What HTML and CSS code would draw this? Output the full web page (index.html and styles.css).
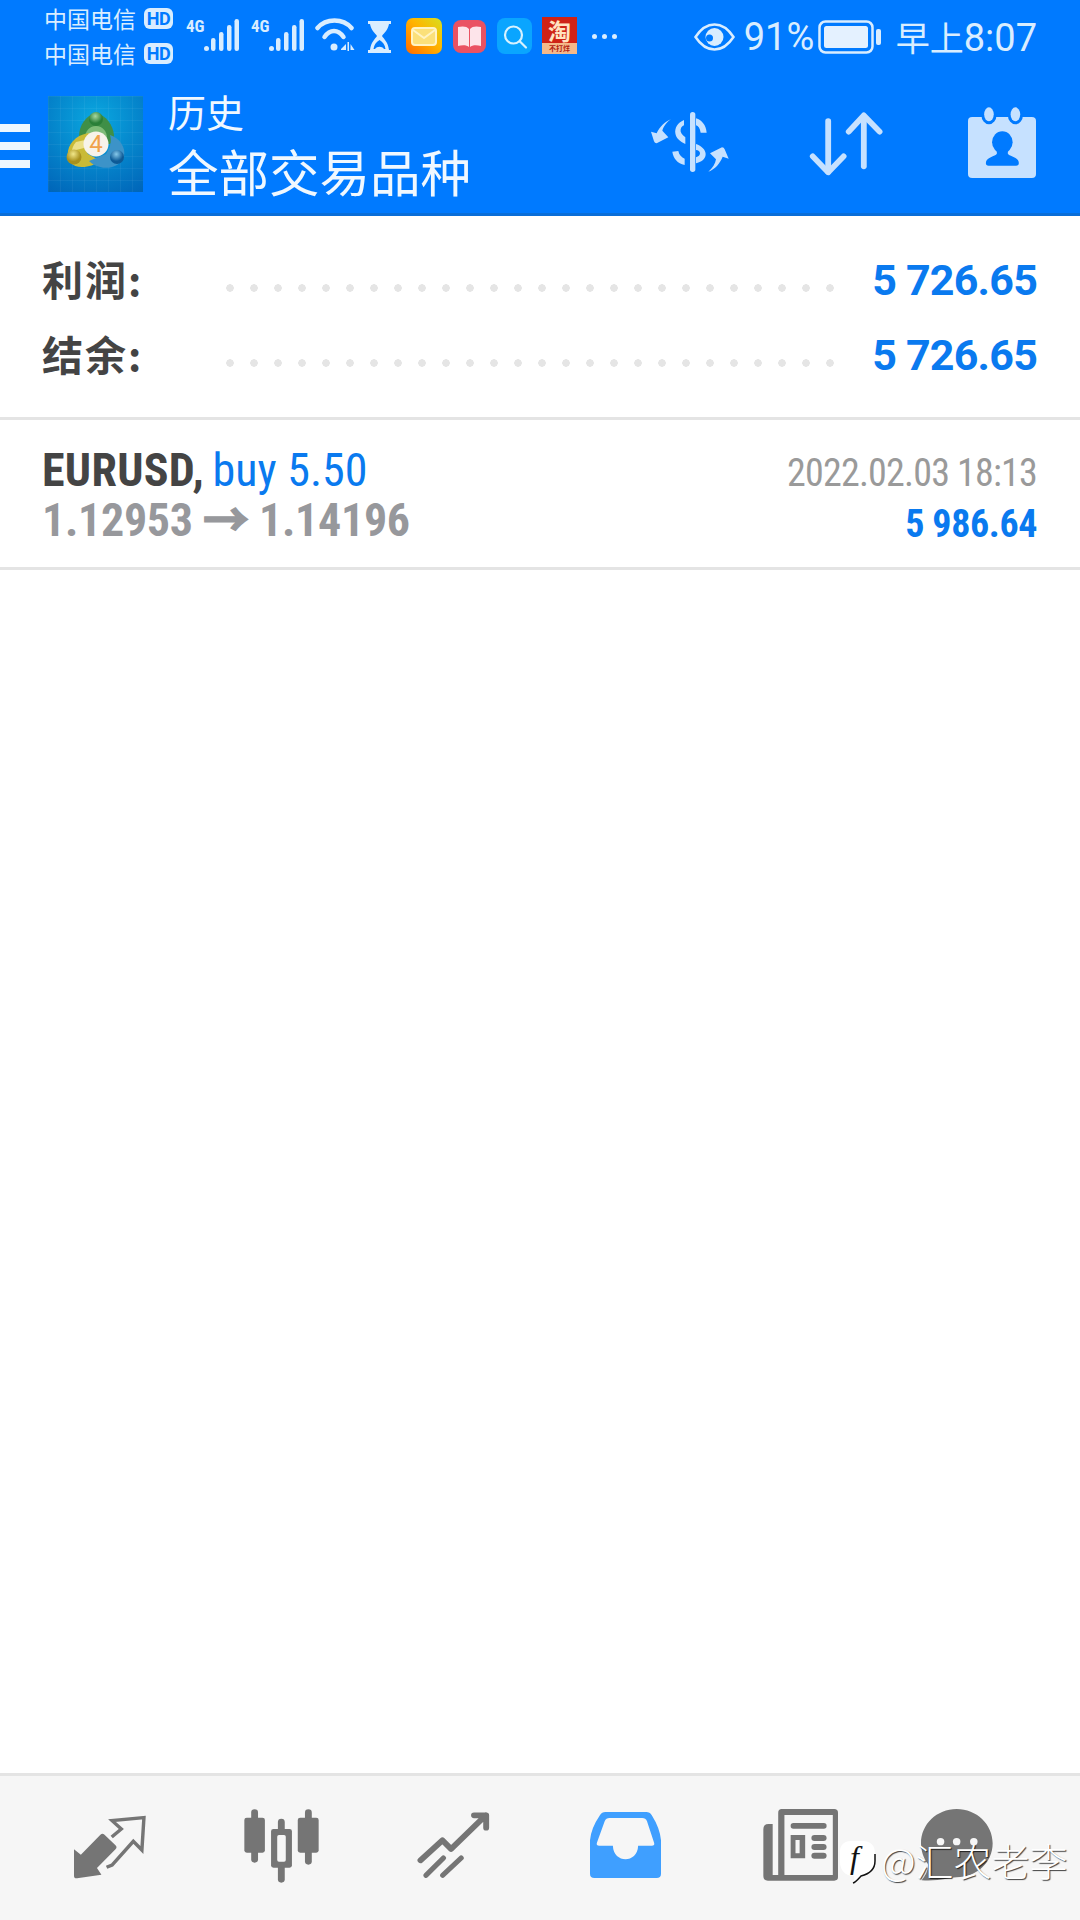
FILE: index.html
```html
<!DOCTYPE html>
<html lang="zh-CN">
<head>
  <meta charset="UTF-8" />
  <meta name="viewport" content="width=device-width, initial-scale=1.0"/>
  <title>历史 – 全部交易品种</title>
  <link rel="stylesheet" href="styles.css">
</head>
<body>
  <div class="phone">
    <header class="header">
      <!-- status bar -->
      <div class="status">
        <div class="carriers">
          <div class="carrier">中国电信<span class="hd">HD</span></div>
          <div class="carrier">中国电信<span class="hd">HD</span></div>
        </div>
        <span class="net">4G</span>
        <svg class="signal" width="35" height="34" viewBox="0 0 35 34"><g fill="#d9edff"><circle cx="2.500" cy="29.500" r="2.500"/><rect x="7" y="19" width="4.500" height="13" rx="2.200"/><rect x="15" y="13" width="4.500" height="19" rx="2.200"/><rect x="23" y="6" width="4.500" height="26" rx="2.200"/><rect x="30.500" y="0" width="4.500" height="32" rx="2.200"/></g></svg>
        <span class="net">4G</span>
        <svg class="signal" width="35" height="34" viewBox="0 0 35 34"><g fill="#d9edff"><circle cx="2.500" cy="29.500" r="2.500"/><rect x="7" y="19" width="4.500" height="13" rx="2.200"/><rect x="15" y="13" width="4.500" height="19" rx="2.200"/><rect x="23" y="6" width="4.500" height="26" rx="2.200"/><rect x="30.500" y="0" width="4.500" height="32" rx="2.200"/></g></svg>
        <svg class="wifi" width="40" height="36" viewBox="0 0 40 36"><g fill="none" stroke="#d9edff" stroke-width="4.500" stroke-linecap="round"><path d="M2.500 11 C11 1 28 1 36.500 11"/><path d="M9.500 20 C15 12 23 12 28.500 20"/></g><circle cx="19" cy="30" r="3.500" fill="#d9edff"/><path d="M26 32 L31 27 V33 H26Z M32.500 25 V34 H34 V25Z M35.500 27 L39.500 33 H35.500Z" fill="#d9edff"/></svg>
        <svg class="glass" width="25" height="34" viewBox="0 0 25 34"><path d="M1 1 H24 V4 H22 C21 10 17 13 15 16 C17 19 21 22 22 30 H24 V33 H1 V30 H3 C4 22 8 19 10 16 C8 13 4 10 3 4 H1Z" fill="#d9edff"/><path d="M12.500 20 C9 22 7 25 6.500 29 H18.500 C18 25 16 22 12.500 20Z" fill="#007aff"/><path d="M8 29 C10 26 15 26 17 29Z" fill="#d9edff"/></svg>
        <svg class="app-mail" width="36" height="36" viewBox="0 0 36 36"><defs><linearGradient id="mailBg" x1="0" y1="1" x2="1" y2="0"><stop offset="0" stop-color="#ff6a00"/><stop offset=".55" stop-color="#ffb400"/><stop offset="1" stop-color="#d6e020"/></linearGradient></defs><rect width="36" height="36" rx="7" fill="url(#mailBg)"/><rect x="6" y="10" width="24" height="17" rx="3" fill="#fbe07a" stroke="#fff3c4" stroke-width="2"/><path d="M7 12 L18 20 L29 12" fill="none" stroke="#fff3c4" stroke-width="2"/></svg>
        <svg class="app-book" width="33" height="33" viewBox="0 0 33 33"><rect width="33" height="33" rx="8" fill="#ea5263"/><path d="M5 7 C9 6 14 6 16 9 V27 C14 25 9 25 5 26Z M28 7 C24 6 19 6 17 9 V27 C19 25 24 25 28 26Z" fill="#fde4ea"/></svg>
        <svg class="app-search" width="35" height="36" viewBox="0 0 35 36"><rect width="35" height="36" rx="8" fill="#0aa5ff"/><circle cx="16.500" cy="17" r="8.500" fill="none" stroke="#d7f2ff" stroke-width="2.200"/><path d="M23 23.500 L29 29.500" stroke="#d7f2ff" stroke-width="2.200" stroke-linecap="round"/></svg>
        <div class="app-tao"><span class="tao-main">淘</span><span class="tao-sub">不打烊</span></div>
        <span class="more"><i></i><i></i><i></i></span>
        <div class="status-right">
          <svg class="eye" width="41" height="28" viewBox="0 0 41 28"><path d="M1.500 14 C8 4 14 1.500 20.500 1.500 C27 1.500 33 4 39.500 14 C33 24 27 26.500 20.500 26.500 C14 26.500 8 24 1.500 14Z" fill="none" stroke="#d9edff" stroke-width="2.500"/><circle cx="20.500" cy="14" r="9" fill="#d9edff"/><circle cx="15.500" cy="15" r="3.500" fill="#007aff"/></svg>
          <span class="pct">91%</span>
          <svg class="battery" width="63" height="34" viewBox="0 0 63 34"><rect x="1.500" y="1.500" width="53" height="31" rx="6" fill="none" stroke="#d9edff" stroke-width="2.500"/><rect x="6" y="6" width="44" height="22" rx="2.500" fill="#e4f1ff"/><rect x="58" y="9" width="5" height="16" rx="2" fill="#d9edff"/></svg>
          <span class="clock">早上<span class="clock-num">8:07</span></span>
        </div>
      </div>

      <!-- app bar -->
      <div class="appbar">
        <div class="burger"><i></i><i></i><i></i></div>
        <svg class="logo" width="95" height="96" viewBox="0 0 95 96">
          <defs>
            <radialGradient id="logoBg" cx=".5" cy=".25" r=".9"><stop offset="0" stop-color="#0aa8e0"/><stop offset="1" stop-color="#0064b8"/></radialGradient>
            <pattern id="logoGrid" width="12" height="12" patternUnits="userSpaceOnUse"><path d="M12 0 H0 V12" fill="none" stroke="#fff" stroke-opacity=".09"/></pattern>
            <radialGradient id="gBall" cx=".45" cy=".3"><stop offset="0" stop-color="#a8d8a0"/><stop offset="1" stop-color="#2a7f38"/></radialGradient>
            <radialGradient id="yBall" cx=".45" cy=".3"><stop offset="0" stop-color="#f1e78a"/><stop offset="1" stop-color="#a8901c"/></radialGradient>
            <radialGradient id="bBall" cx=".45" cy=".3"><stop offset="0" stop-color="#86c8ea"/><stop offset="1" stop-color="#0d5a96"/></radialGradient>
          </defs>
          <rect width="95" height="96" fill="url(#logoBg)"/>
          <rect width="95" height="96" fill="url(#logoGrid)"/>
          <path d="M48 17 C38 19 31 30 31 40 C31 43 32 46 34 48 L62 48 C65 45 66 42 66 39 C65 29 58 19 48 17Z" fill="#3f8f47"/>
          <path d="M48 30 C41 30 37 36 37 42 L59 42 C59 36 55 30 48 30Z" fill="#7fbc78"/>
          <path d="M44 37 C31 37 22 45 20 55 C18 65 24 71 34 71 C41 71 47 69 51 64 L40 58 C36 52 38 44 44 37Z" fill="#c9ba36"/>
          <path d="M28 46 C25 49 24 53 24 55 L36 52 L37 44Z" fill="#ece08a"/>
          <path d="M62 39 C72 42 78 52 76 60 C74 69 62 74 52 71 C47 70 44 68 41 65 L58 58 C62 52 64 46 62 39Z" fill="#3c93c8"/>
          <circle cx="48" cy="23" r="7" fill="url(#gBall)"/>
          <circle cx="26" cy="61" r="7.500" fill="url(#yBall)"/>
          <circle cx="69" cy="61" r="7" fill="url(#bBall)"/>
          <circle cx="48" cy="48" r="12.500" fill="#f7f3ea"/>
          <text class="logo-num" x="48" y="56" text-anchor="middle">4</text>
        </svg>
        <div class="titles">
          <div class="title-small">历史</div>
          <div class="title-big">全部交易品种</div>
        </div>
        <div class="actions">
          <svg class="act-dollar" width="79" height="60" viewBox="30 36 237 180" preserveAspectRatio="none">
            <g fill="#c6e1ff">
              <rect x="150" y="36" width="16" height="180" rx="8"/>
              <path d="M168 55 C185 60 198 75 200 98 L182 98 C180 85 175 78 168 76Z"/>
              <path d="M132 60 C112 68 104 85 106 100 C108 115 120 125 136 132 L136 112 C125 105 120 95 122 88 C124 80 128 78 132 76Z"/>
              <path d="M168 132 C185 138 197 150 197 162 C197 178 183 186 168 190 L168 172 C176 170 180 166 180 160 C180 154 175 150 168 150Z"/>
              <path d="M97 155 L115 153 C117 165 125 172 134 176 L134 195 C112 190 100 175 97 155Z"/>
              <path d="M93 58 C80 66 70 80 67 92 L85 112 L50 130 Q44 130 42 124 L33 95 L50 100 C58 82 75 65 93 58Z"/>
              <path d="M205 215 C218 205 226 190 228 178 L210 160 L246 142 Q252 142 254 148 L266 176 L248 170 C240 190 225 208 205 215Z"/>
            </g>
          </svg>
          <svg class="act-sort" width="74" height="64" viewBox="780 335 216 192" preserveAspectRatio="none">
            <g fill="none" stroke="#c6e1ff" stroke-width="17" stroke-linecap="round" stroke-linejoin="round">
              <path d="M836 362 V514"/>
              <path d="M791 468 L836 516 L881 468"/>
              <path d="M940 350 V498"/>
              <path d="M896 394 L940 345 L986 394"/>
            </g>
          </svg>
          <svg class="act-cal" width="68" height="71" viewBox="1242 322 198 213" preserveAspectRatio="none">
            <rect x="1242" y="352" width="198" height="183" rx="12" fill="#c6e1ff"/>
            <ellipse cx="1303" cy="346" rx="22" ry="28" fill="#007aff"/>
            <ellipse cx="1380" cy="346" rx="22" ry="28" fill="#007aff"/>
            <ellipse cx="1303" cy="344" rx="14" ry="21" fill="#c6e1ff"/>
            <ellipse cx="1380" cy="344" rx="14" ry="21" fill="#c6e1ff"/>
            <ellipse cx="1342" cy="428" rx="30" ry="33" fill="#007aff"/>
            <path d="M1326 450 H1358 V462 C1362 470 1390 472 1390 490 Q1390 498 1382 498 H1302 Q1294 498 1294 490 C1294 472 1322 470 1326 462Z" fill="#007aff"/>
          </svg>
        </div>
      </div>
    </header>

    <section class="summary">
      <div class="sum-row">
        <span class="sum-label">利润:</span>
        <span class="dots"></span>
        <span class="sum-value">5 726.65</span>
      </div>
      <div class="sum-row">
        <span class="sum-label">结余:</span>
        <span class="dots"></span>
        <span class="sum-value">5 726.65</span>
      </div>
    </section>

    <section class="trade">
      <div class="trade-left">
        <div class="trade-name"><b>EURUSD,</b> <span class="blue">buy 5.50</span></div>
        <div class="trade-price">1.12953 <span class="arrow">→</span> 1.14196</div>
      </div>
      <div class="trade-right">
        <div class="trade-date">2022.02.03 18:13</div>
        <div class="trade-profit">5 986.64</div>
      </div>
    </section>

    <div class="spacer"></div>

    <nav class="tabs">
      <svg class="tab-trade" width="72" height="64" viewBox="215 163 210 192" preserveAspectRatio="none">
        <path d="M292 222 Q298 216 304 222 L336 254 Q342 260 336 266 L282 322 L295 342 L224 353 Q215 354 215 345 L215 266 L235 282Z" fill="#757575"/>
        <path d="M325 229 L353 205 L326 180 L419 171 L413 268 L388 242 L326 313 L310 320" fill="none" stroke="#757575" stroke-width="10"/>
      </svg>
      <svg class="tab-candles" width="75" height="74" viewBox="708 147 219 222" preserveAspectRatio="none">
        <g fill="#757575">
          <rect x="729" y="148" width="20" height="160" rx="10"/>
          <rect x="709" y="173" width="60" height="105" rx="7"/>
          <rect x="807" y="176" width="20" height="192" rx="10"/>
          <rect x="787" y="207" width="61" height="116" rx="7"/>
          <rect x="886" y="148" width="20" height="166" rx="10"/>
          <rect x="865" y="173" width="61" height="105" rx="7"/>
        </g>
        <rect x="805" y="225" width="25" height="80" rx="5" fill="#f6f6f6"/>
      </svg>
      <svg class="tab-line" width="73" height="66" viewBox="1212 155 210 198" preserveAspectRatio="none">
        <g fill="none" stroke="#757575" stroke-linecap="round" stroke-linejoin="round">
          <path d="M1222 300 L1285 240 L1310 266 L1410 165 M1376 165 H1411 V202" stroke-width="17"/>
          <path d="M1238 345 L1288 293 M1286 345 L1339 293" stroke-width="15"/>
        </g>
      </svg>
      <svg class="tab-inbox" width="71" height="66" viewBox="147 155 208 198" preserveAspectRatio="none">
        <path d="M192 155 H312 Q322 155 328 165 Q352 204 355 240 V340 Q355 353 342 353 H160 Q147 353 147 340 V240 Q150 204 176 165 Q182 155 192 155Z" fill="#3f9fff"/>
        <path d="M204 173 H300 Q310 173 314 183 L335 248 Q337 256 328 256 H288 C286 310 216 310 214 256 H174 Q165 256 167 248 L190 183 Q194 173 204 173Z" fill="#f6f6f6"/>
      </svg>
      <svg class="tab-news" width="75" height="72" viewBox="646 147 217 216" preserveAspectRatio="none">
        <path d="M700 147 H852 Q863 147 863 158 V352 Q863 362 852 362 H660 Q647 362 647 348 V208 Q647 192 662 192 H674 V345 H690 V158 Q690 147 700 147Z M708 165 V345 H848 V165Z" fill="#757575" fill-rule="evenodd"/>
        <g fill="#757575">
          <rect x="726" y="189" width="104" height="17" rx="8"/>
          <path d="M726 225 H768 V295 H726Z M740 240 V280 H752 V240Z" fill-rule="evenodd"/>
          <rect x="786" y="225" width="44" height="18" rx="9"/>
          <rect x="786" y="252" width="44" height="18" rx="9"/>
          <rect x="786" y="278" width="44" height="18" rx="9"/>
        </g>
      </svg>
      <svg class="tab-chat" width="72" height="72" viewBox="1108 147 210 216" preserveAspectRatio="none">
        <path d="M1212 147 C1270 147 1317 193 1317 250 C1317 308 1270 352 1212 352 C1190 352 1160 365 1110 361 C1122 345 1130 330 1128 312 C1115 295 1108 272 1108 250 C1108 193 1154 147 1212 147Z" fill="#757575"/>
        <g fill="#f6f6f6"><circle cx="1165" cy="245" r="11"/><circle cx="1212" cy="245" r="11"/><circle cx="1262" cy="245" r="11"/></g>
      </svg>
    </nav>

    <!-- watermark over tab bar -->
    <div class="mark">
      <svg class="mark-logo" width="37" height="44" viewBox="0 0 37 44">
        <path d="M12 1 H24 C32 1 36 6 36 14 V21 C36 29 30 34 22 36 C20 38 17 42 14 42 C15 40 16 38 15 36 C6 36 1 30 1 22 V12 C1 5 5 1 12 1Z" fill="#fff"/>
        <path d="M36 14 V21 C36 29 30 34 22 36 C20 38 17 42 14 43" fill="none" stroke="#111" stroke-width="1.500"/>
        <text class="mark-f" x="11" y="28">f</text>
      </svg>
      <span class="mark-text">@汇农老李</span>
    </div>
  </div>
</body>
</html>
```

FILE: styles.css
```css
* {
  box-sizing: border-box;
}
body {
  margin: 0;
  background: #fff;
  font-family: 'Roboto', 'Noto Sans CJK SC', sans-serif;
}
.phone {
  position: relative;
  width: 1080px;
  height: 1920px;
  display: flex;
  flex-direction: column;
  overflow: hidden;
}

/* header */
.header {
  height: 216px;
  background: #007aff;
  border-bottom: 3px solid #0a6ed8;
}
.status {
  height: 75px;
  display: flex;
  align-items: flex-start;
  padding-left: 44px;
  color: #d9edff;
}
.carriers {
  width: 142px;
  padding-top: 1px;
}
.carrier {
  display: flex;
  align-items: center;
  height: 35px;
  font-size: 23px;
  font-family: 'Noto Sans CJK SC', sans-serif;
  line-height: 35px;
}
.hd {
  margin-left: 8px;
  width: 29px;
  height: 21px;
  border-radius: 6px;
  background: #d9edff;
  color: #007aff;
  font: 700 18px/21px 'Roboto', sans-serif;
  text-align: center;
  letter-spacing: -.5px;
}
.net {
  width: 18px;
  margin-top: 17px;
  font: 700 17px/18px 'Roboto', sans-serif;
  font-stretch: 75%;
}
.signal {
  margin: 19px 12px 0 0;
}
.wifi {
  margin: 17px 0 0 -1px;
}
.glass {
  margin: 20px 0 0 12px;
}
.app-mail {
  margin: 18px 0 0 14px;
}
.app-book {
  margin: 20px 0 0 11px;
}
.app-search {
  margin: 18px 0 0 11px;
}
.app-tao {
  width: 35px;
  height: 37px;
  margin: 17px 0 0 10px;
  background: #cf2216;
  display: flex;
  flex-direction: column;
  align-items: center;
}
.tao-main {
  height: 26px;
  font: 700 23px/26px 'Noto Sans CJK SC', sans-serif;
  color: #ffe3c2;
}
.tao-sub {
  width: 35px;
  height: 11px;
  background: #f4b98a;
  font: 700 7px/11px 'Noto Sans CJK SC', sans-serif;
  color: #b01a10;
  text-align: center;
}
.more {
  margin: 34px 0 0 15px;
  display: flex;
  gap: 5px;
}
.more i {
  display: block;
  width: 5px;
  height: 5px;
  border-radius: 50%;
  background: #d9edff;
}
.status-right {
  margin-left: auto;
  padding: 20px 43px 0 0;
  display: flex;
  align-items: center;
  height: 54px;
}
.eye {
  margin-right: 9px;
}
.pct {
  width: 74px;
  font: 400 38px/34px 'Roboto', sans-serif;
}
.clock {
  font: 400 34px/34px 'Noto Sans CJK SC', sans-serif;
}
.clock-num {
  font: 400 38px/34px 'Roboto', sans-serif;
}
.battery {
  margin-right: 15px;
}

.appbar {
  height: 138px;
  display: flex;
  align-items: flex-start;
  color: #f0f8ff;
}
.burger {
  width: 30px;
  margin-top: 49px;
  display: flex;
  flex-direction: column;
  gap: 10px;
}
.burger i {
  display: block;
  height: 8px;
  background: #eef7ff;
}
.logo {
  margin: 21px 0 0 18px;
}
.titles {
  margin-left: 25px;
  font-family: 'Noto Sans CJK SC', sans-serif;
  padding-top: 10px;
}
.title-small {
  font-size: 38px;
  line-height: 52px;
}
.title-big {
  font-size: 50.5px;
  line-height: 66px;
}
.actions {
  margin-left: auto;
  padding: 37px 44px 0 0;
  display: flex;
  align-items: flex-start;
}
.logo-num {
  font: 400 24px 'Roboto', sans-serif;
  fill: #f0a24c;
}
.act-sort {
  margin-left: 80px;
}
.act-cal {
  margin: -5px 0 0 85px;
}

/* summary */
.summary {
  height: 204px;
  padding: 27px 43px 0 42px;
  border-bottom: 3px solid #e4e4e4;
}
.sum-row {
  height: 75px;
  display: flex;
  align-items: center;
}
.sum-label {
  width: 184px;
  padding-bottom: 6px;
  font: 700 41px/50px 'Noto Sans CJK SC', sans-serif;
  letter-spacing: 2px;
  color: #444;
}
.dots {
  width: 608px;
  height: 8px;
  margin-top: 14px;
  background: radial-gradient(circle at 4px 4px, #e5e5e5 3.5px, transparent 4px) left top / 24px 8px repeat-x;
}
.sum-value {
  margin-left: auto;
  padding-bottom: 2px;
  font: 700 43px/50px 'Roboto', sans-serif;
  letter-spacing: -.8px;
  color: #0a7aef;
}

/* trade row */
.trade {
  height: 150px;
  padding: 25px 43px 0 42px;
  display: flex;
  justify-content: space-between;
  border-bottom: 3px solid #e4e4e4;
}
.trade-name, .trade-price {
  font-size: 46px;
  line-height: 50px;
  font-stretch: 75%;
}
.trade-name b {
  color: #444;
  letter-spacing: .3px;
}
.blue {
  margin-left: -2px;
  color: #0a7aef;
}
.trade-price {
  color: #97989c;
  font-weight: 700;
  letter-spacing: -.3px;
}
.arrow {
  -webkit-text-stroke: 1.5px #97989c;
}
.trade-right {
  padding-top: 3px;
  text-align: right;
}
.trade-date {
  font-size: 38px;
  line-height: 51px;
  letter-spacing: -.8px;
  color: #9a9a9a;
  font-stretch: 75%;
}
.trade-profit {
  font-size: 38px;
  line-height: 51px;
  font-weight: 700;
  letter-spacing: -.4px;
  color: #0a7aef;
  font-stretch: 75%;
}

.spacer {
  flex: 1;
}

/* tab bar */
.tabs {
  height: 147px;
  background: #f6f6f6;
  border-top: 3px solid #e4e4e4;
  padding: 33px 0 0 74px;
  display: flex;
  gap: 98px;
  align-items: flex-start;
}
.tab-trade {
  margin-top: 6px;
}
.tab-line {
  margin-top: 3px;
}
.tab-inbox {
  margin: 3px 0 0 2px;
}
.tab-news {
  margin-left: 4px;
}
.tab-chat {
  margin-left: -15px;
}

/* watermark */
.mark {
  position: absolute;
  left: 839px;
  top: 1840px;
  display: flex;
  align-items: flex-start;
  gap: 5px;
}
.mark-logo {
  flex: none;
}
.mark-f {
  font: italic 400 32px 'Liberation Serif', serif;
  fill: #111;
}
.mark-text {
  margin-top: -3px;
  font: 300 38px/46px 'Noto Sans CJK SC', sans-serif;
  color: #fff;
  text-shadow: 1px 1px 1px rgba(0,0,0,.75);
}
```
